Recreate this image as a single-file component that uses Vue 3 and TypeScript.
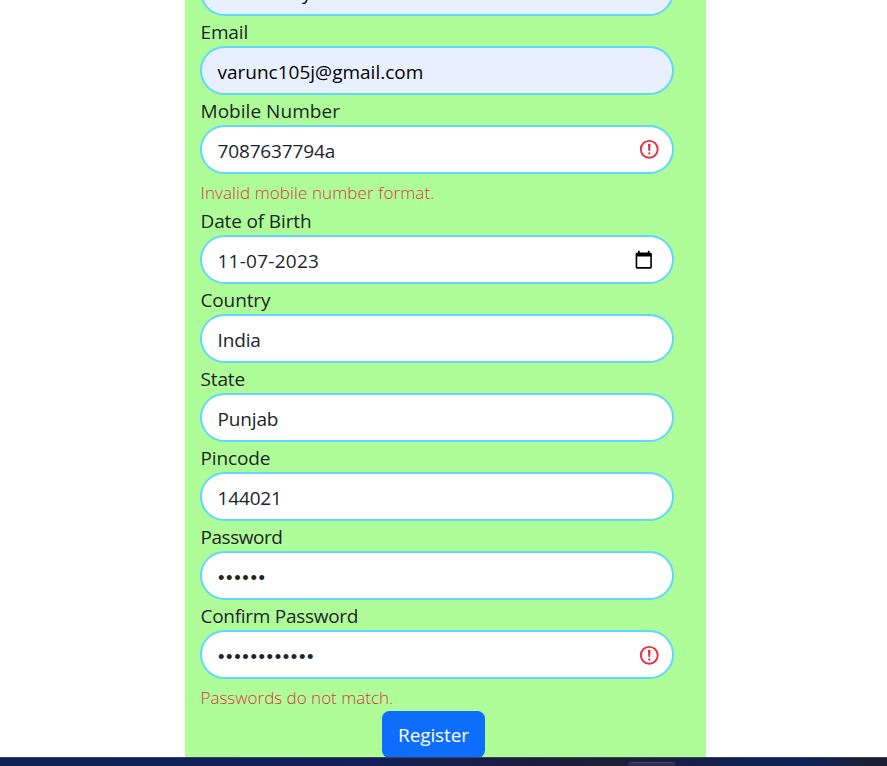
<script setup lang="ts">
interface Field {
  id: string
  label: string
  value: string
  kind?: 'autofill' | 'secret' | 'date'
  error?: string
}

const fields: Field[] = [
  { id: 'email', label: 'Email', value: 'varunc105j@gmail.com', kind: 'autofill' },
  { id: 'mobile', label: 'Mobile Number', value: '7087637794a', error: 'Invalid mobile number format.' },
  { id: 'dob', label: 'Date of Birth', value: '11-07-2023', kind: 'date' },
  { id: 'country', label: 'Country', value: 'India' },
  { id: 'state', label: 'State', value: 'Punjab' },
  { id: 'pincode', label: 'Pincode', value: '144021' },
  { id: 'password', label: 'Password', value: '••••••', kind: 'secret' },
  { id: 'confirm', label: 'Confirm Password', value: '••••••••••••', kind: 'secret', error: 'Passwords do not match.' },
]
</script>

<template>
  <div class="screen">
    <main class="viewport">
      <form class="card" @submit.prevent>
        <div class="control autofill clipped"><span class="value">y</span></div>
        <div v-for="f in fields" :key="f.id" class="field" :class="f.id">
          <div class="label"><span>{{ f.label }}</span></div>
          <div class="control" :class="f.kind">
            <span class="value">{{ f.value }}</span>
            <svg v-if="f.error" class="warn" viewBox="0 0 12 12" fill="none" stroke="#dc3545">
              <circle cx="6" cy="6" r="4.5" />
              <path stroke-linejoin="round" d="M5.8 3.6h.4L6 6.5z" />
              <circle cx="6" cy="8.2" r=".6" fill="#dc3545" stroke="none" />
            </svg>
            <svg v-if="f.kind === 'date'" class="calendar" viewBox="0 0 24 24">
              <path d="M20 3h-1V1h-2v2H7V1H5v2H4c-1.1 0-2 .9-2 2v16c0 1.1.9 2 2 2h16c1.1 0 2-.9 2-2V5c0-1.1-.9-2-2-2zm0 18H4V8h16v13z" />
            </svg>
          </div>
          <div v-if="f.error" class="error"><span>{{ f.error }}</span></div>
        </div>
        <button class="register" type="submit">Register</button>
      </form>
    </main>
    <footer class="taskbar"><div class="tile"></div></footer>
  </div>
</template>

<style>
body {
  background: #fff;
  overflow: hidden;
}
</style>

<style scoped>
.screen {
  display: grid;
  grid-template-rows: 757px 9px;
  height: 766px;
  overflow: hidden;
  font-family: "Segoe UI", "Open Sans", "Noto Sans", sans-serif;
  font-size: 19px;
  color: #212529;
}
.viewport {
  overflow: hidden;
}
.card {
  box-sizing: border-box;
  display: flex;
  flex-direction: column;
  width: 521px;
  height: 790px;
  margin: -33px 0 0 185px;
  padding: 0 32px 0 15px;
  background: #affd98;
}
.label {
  display: flex;
  height: 30px;
  padding-left: 0.5px;
  line-height: 32px;
  letter-spacing: -0.14px;
  white-space: nowrap;
}
.control {
  box-sizing: border-box;
  display: flex;
  align-items: center;
  justify-content: space-between;
  flex: none;
  width: 474px;
  height: 49px;
  padding: 0 11.25px 0 15.5px;
  border: 2px solid #5fd8fb;
  border-radius: 25px;
  background: #fff;
}
.value {
  line-height: 30px;
  padding-top: 2px;
  letter-spacing: -0.15px;
  white-space: nowrap;
}
.autofill {
  background: #e8f0fe;
  color: #000;
}
.autofill .value {
  letter-spacing: 0;
}
.clipped {
  padding-left: 100px;
}
.date {
  padding-right: 18.5px;
}
.mobile .label {
  letter-spacing: 0.04px;
}
.dob .value {
  letter-spacing: 0.25px;
}
.password .label {
  letter-spacing: -0.45px;
}
.confirm .label {
  letter-spacing: -0.28px;
}
.secret .value {
  font-family: "Liberation Sans", sans-serif;
  font-size: 18.5px;
  letter-spacing: 1.62px;
  padding: 4px 0 0 0.5px;
}
.warn {
  width: 22.5px;
  height: 22.5px;
}
.confirm .warn {
  margin-top: 2px;
}
.calendar {
  width: 19.5px;
  height: 19.5px;
}
.error {
  display: flex;
  height: 31px;
  padding-left: 0.5px;
  line-height: 37px;
  font-size: 17px;
  font-weight: 350;
  color: #dc3545;
  white-space: nowrap;
}
.mobile .error {
  letter-spacing: 0.1px;
}
.register {
  width: 103px;
  height: 47px;
  flex: none;
  margin: 1px 0 0 182px;
  padding: 1px 0 0;
  border: 0;
  border-radius: 7.5px;
  background: #0d6efd;
  color: #fff;
  font: inherit;
  letter-spacing: -0.12px;
}
.taskbar {
  box-sizing: border-box;
  display: flex;
  border-top: 1px solid #3b4157;
  background: linear-gradient(90deg, #0d2158 0%, #0e205a 25%, #14205a 42%, #191d3c 60%, #1d1f33 69%, #191d42 76%, #0f2052 83%, #0e2059 91%, #1b1f35 98%);
}
.tile {
  width: 48px;
  margin: 4px 0 0 628px;
  border-top: 1px solid #414862;
  border-radius: 4px 4px 0 0;
  background: #292f4b;
}
</style>
